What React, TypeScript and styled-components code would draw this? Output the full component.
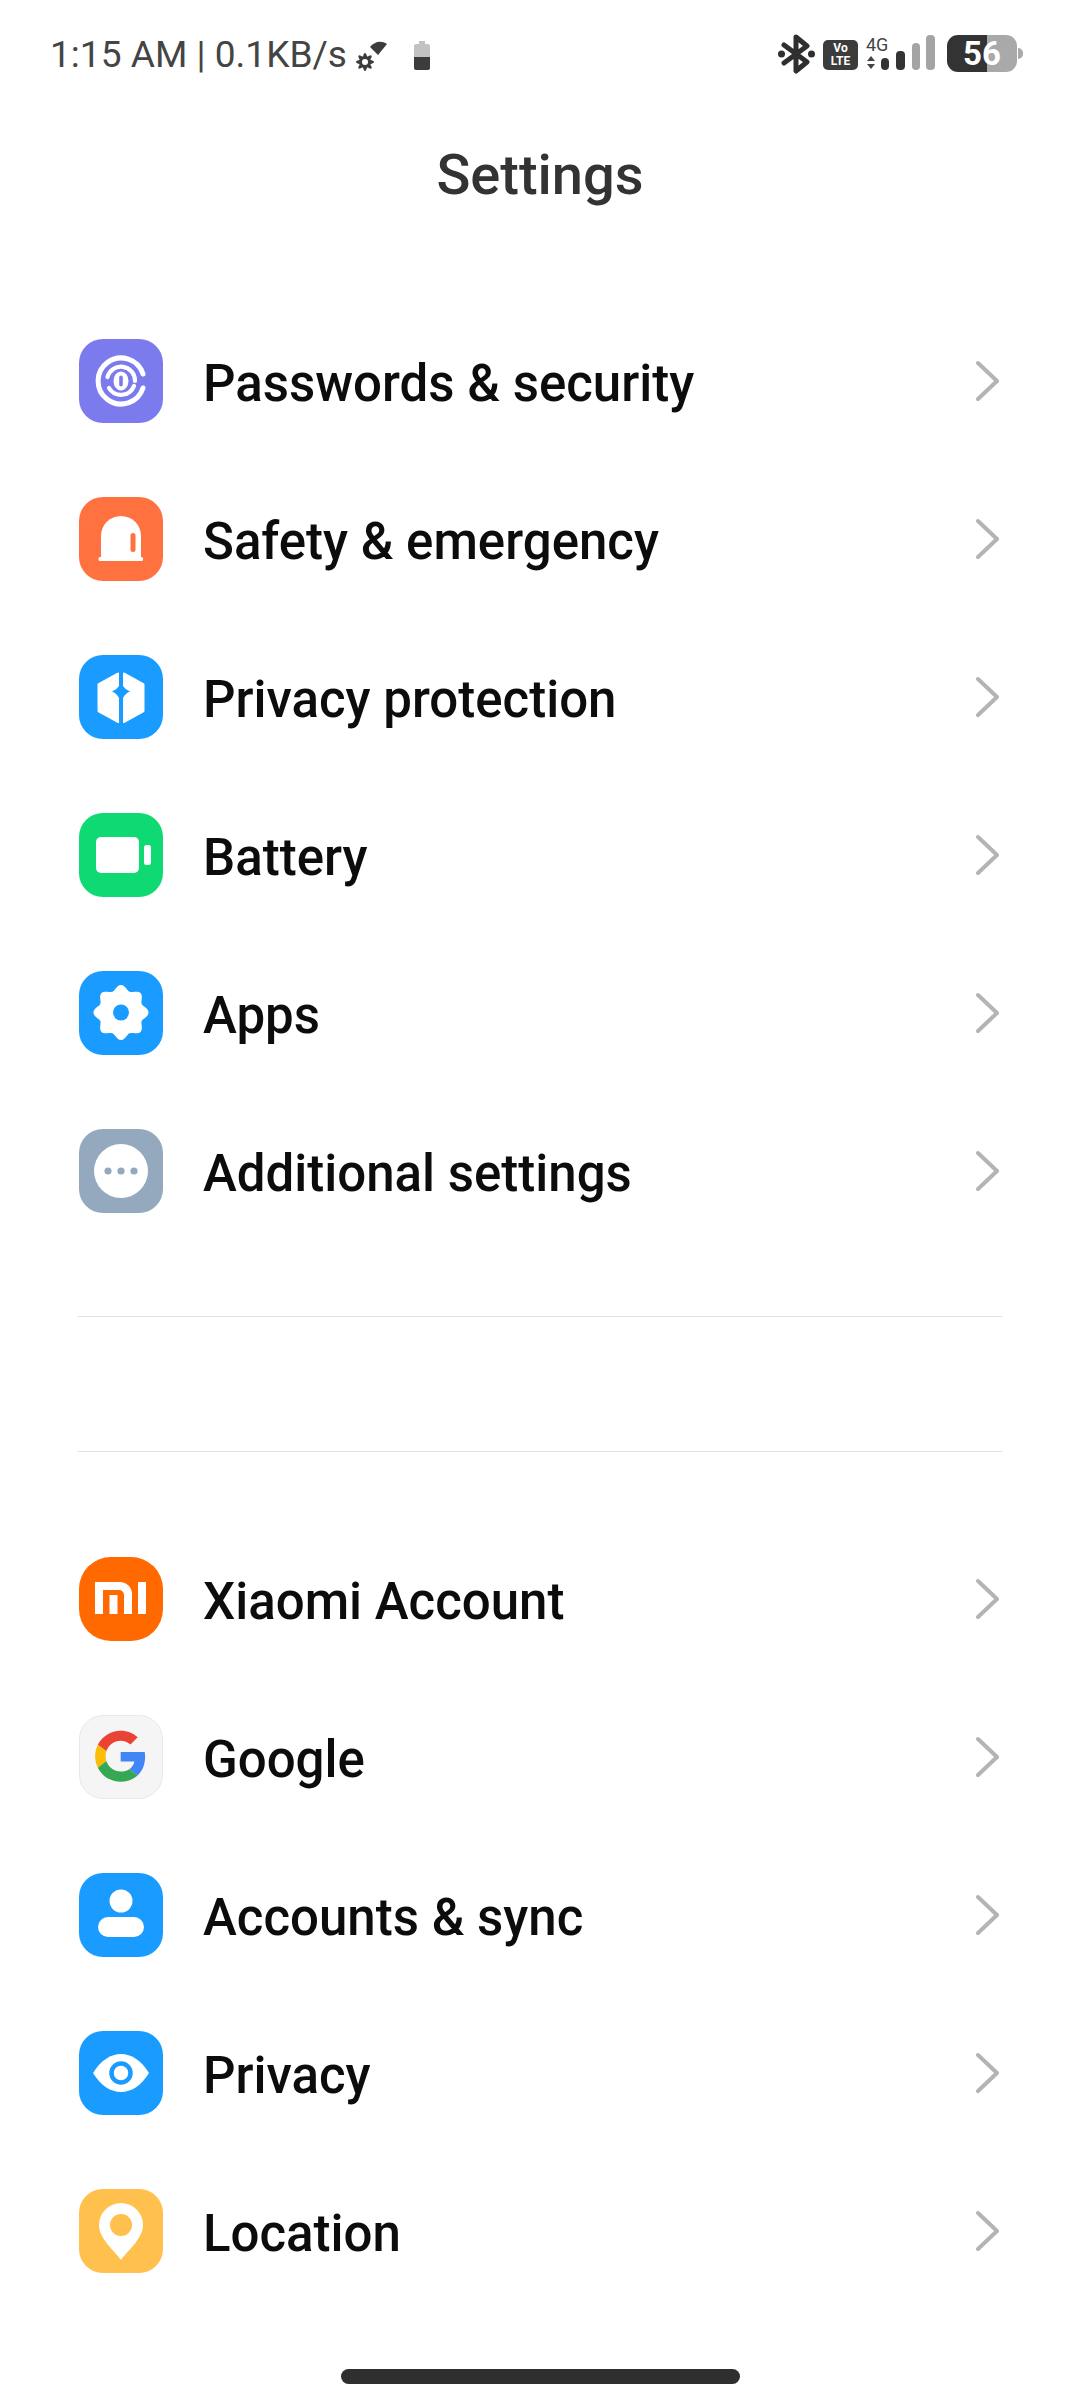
import styled, { createGlobalStyle } from "styled-components";
import type { ReactNode } from "react";

const GlobalStyle = createGlobalStyle`
  html, body {
    margin: 0;
    padding: 0;
    background: #fff;
    font-family: Roboto, "Noto Sans", sans-serif;
  }
`;

const Page = styled.div`
  width: 1080px;
  height: 2400px;
  background: #fff;
  overflow: hidden;
`;

const StatusBar = styled.div`
  height: 72px;
  padding: 34px 63px 0 50px;
  box-sizing: border-box;
  display: flex;
  align-items: flex-start;
  justify-content: space-between;
`;

const StatusLeft = styled.div`
  display: flex;
  align-items: flex-start;
`;

const StatusText = styled.span`
  font-size: 37.1px;
  line-height: 42px;
  color: #444;
`;

const StatusGlyph = styled.svg<{ $left: number; $top: number }>`
  flex: none;
  margin-left: ${(p) => p.$left}px;
  margin-top: ${(p) => p.$top}px;
`;

const StatusRight = styled.div`
  display: flex;
  align-items: flex-start;
  gap: 8px;
`;

const Volte = styled.div`
  width: 35px;
  height: 30px;
  margin-top: 6px;
  border-radius: 5px;
  background: #3c3c3c;
  color: #fff;
  font-size: 12px;
  font-weight: 700;
  line-height: 12.5px;
  text-align: center;
  padding-top: 2px;
  box-sizing: border-box;
`;

const BatteryPill = styled.div`
  position: relative;
  width: 70px;
  height: 37px;
  margin-left: 1px;
  margin-top: 1px;
  border-radius: 11px;
  background: linear-gradient(90deg, #333 0 57%, #a9a9a9 57% 100%);
  color: #fff;
  font-size: 33px;
  font-weight: 700;
  line-height: 37px;
  text-align: center;

  &::after {
    content: "";
    position: absolute;
    right: -6px;
    top: 13px;
    width: 5px;
    height: 11px;
    border-radius: 0 5px 5px 0;
    background: #a9a9a9;
  }
`;

const Title = styled.h1`
  margin: 0;
  height: 230px;
  padding-top: 72px;
  box-sizing: border-box;
  font-size: 56px;
  line-height: 62px;
  font-weight: 500;
  color: #333;
  text-align: center;
`;

const Row = styled.div`
  height: 158px;
  display: flex;
  align-items: center;
  padding: 0 80px 0 79px;
`;

const Label = styled.span`
  flex: 1;
  margin-left: 40px;
  padding-top: 5px;
  font-size: 51px;
  font-weight: 500;
  color: #0c0c0c;
`;

const IconBox = styled.svg<{ $bg: string; $radius?: number; $border?: string }>`
  width: 84px;
  height: 84px;
  flex: none;
  box-sizing: border-box;
  background: ${(p) => p.$bg};
  border-radius: ${(p) => p.$radius ?? 24}px;
  border: ${(p) => (p.$border ? `1px solid ${p.$border}` : "none")};
`;

const Chevron = styled.svg`
  width: 24px;
  height: 42px;
  flex: none;
  fill: none;
  stroke: #b4b4b4;
  stroke-width: 4;
  stroke-linecap: round;
  stroke-linejoin: round;
`;

const Divider = styled.hr<{ $top: number }>`
  margin: ${(p) => p.$top}px 78px 0;
  border: none;
  height: 1px;
  background: #e2e2e2;
`;

const Spacer = styled.div<{ $height: number }>`
  height: ${(p) => p.$height}px;
`;

const HomeBar = styled.div`
  width: 399px;
  height: 15px;
  margin: 59px auto 0;
  border-radius: 8px;
  background: #2f2f2f;
`;

// wavy outline of a gear: radius swings between the mid value +/- swing, 8 bumps
const gearOutline = (cx: number, cy: number, mid: number, swing: number) =>
  Array.from({ length: 96 }, (_, i) => {
    const a = (i * Math.PI * 2) / 96;
    const r = mid + swing * Math.cos(8 * a);
    return `${(cx + r * Math.sin(a)).toFixed(2)},${(cy - r * Math.cos(a)).toFixed(2)}`;
  }).join(" ");

const PURPLE = "#7C7BEE";
const ORANGE = "#FF7240";
const BLUE = "#1A9BFF";
const GREEN = "#0FD973";
const SLATE = "#94A9BD";

const icons: Record<string, ReactNode> = {
  passwords: (
    <IconBox viewBox="0 0 84 84" $bg={PURPLE}>
      <g fill="none" stroke="#fff" strokeLinecap="round">
        <path d="M64 35A23 23 0 1 0 64 49" strokeWidth="5" />
        <path d="M28.5 38A14 14 0 0 1 56 42" strokeWidth="4.2" />
        <path d="M30 49A14 14 0 0 0 55 47" strokeWidth="4.2" />
      </g>
      <ellipse cx="42" cy="42" rx="7.5" ry="9.5" fill="#fff" />
      <rect x="40.2" y="36.5" width="3.6" height="11" rx="1.8" fill={PURPLE} />
    </IconBox>
  ),
  safety: (
    <IconBox viewBox="0 0 84 84" $bg={ORANGE}>
      <path d="M22 60V39A20 20 0 0 1 62 39V60Z" fill="#fff" />
      <rect x="19.5" y="60" width="44.5" height="4" rx="1.5" fill="#fff" />
      <rect x="51.5" y="36" width="5" height="19" rx="2.5" fill={ORANGE} />
    </IconBox>
  ),
  shield: (
    <IconBox viewBox="0 0 84 84" $bg={BLUE}>
      <path
        d="M39 19L20 29.5V56L39 66.5ZM45 19L64 29.5V56L45 66.5Z"
        fill="#fff"
        stroke="#fff"
        strokeWidth="3"
        strokeLinejoin="round"
      />
      <path
        d="M40 15V31Q37.5 35 33 36.5Q37.5 38 40 43V70H44V43Q46.5 38 51 36.5Q46.5 35 44 31V15Z"
        fill={BLUE}
      />
    </IconBox>
  ),
  battery: (
    <IconBox viewBox="0 0 84 84" $bg={GREEN}>
      <rect x="17" y="24" width="43" height="36" rx="5" fill="#fff" />
      <rect x="65" y="32" width="7" height="20" rx="2.5" fill="#fff" />
    </IconBox>
  ),
  apps: (
    <IconBox viewBox="0 0 84 84" $bg={BLUE}>
      <polygon points={gearOutline(42, 41.5, 25, 2.6)} fill="#fff" />
      <circle cx="42" cy="41.5" r="8" fill={BLUE} />
    </IconBox>
  ),
  more: (
    <IconBox viewBox="0 0 84 84" $bg={SLATE}>
      <circle cx="42" cy="42" r="27" fill="#fff" />
      <circle cx="29" cy="42" r="3.6" fill={SLATE} />
      <circle cx="42" cy="42" r="3.6" fill={SLATE} />
      <circle cx="55" cy="42" r="3.6" fill={SLATE} />
    </IconBox>
  ),
  xiaomi: (
    <IconBox viewBox="0 0 84 84" $bg="#FF6900" $radius={32}>
      <path
        d="M16 25H41A12 12 0 0 1 53 37V57H45V38A5 5 0 0 0 40 33H24V57H16Z"
        fill="#fff"
      />
      <rect x="30.5" y="38" width="8" height="19" fill="#fff" />
      <rect x="59" y="25" width="8" height="32" fill="#fff" />
    </IconBox>
  ),
  google: (
    <IconBox viewBox="0 0 84 84" $bg="#F5F5F6" $border="#E9E9E9">
      <g transform="translate(15.5 15) scale(1.09)">
        <path fill="#EA4335" d="M24 9.5c3.54 0 6.71 1.22 9.21 3.6l6.85-6.85C35.9 2.38 30.47 0 24 0 14.62 0 6.51 5.38 2.56 13.22l7.98 6.19C12.43 13.72 17.74 9.5 24 9.5z" />
        <path fill="#4285F4" d="M46.98 24.55c0-1.57-.15-3.09-.38-4.55H24v9.02h12.94c-.58 2.96-2.26 5.48-4.78 7.18l7.73 6c4.51-4.18 7.09-10.36 7.09-17.65z" />
        <path fill="#FBBC05" d="M10.53 28.59c-.48-1.45-.76-2.99-.76-4.59s.27-3.14.76-4.59l-7.98-6.19C.92 16.46 0 20.12 0 24c0 3.88.92 7.54 2.56 10.78l7.97-6.19z" />
        <path fill="#34A853" d="M24 48c6.48 0 11.93-2.13 15.89-5.81l-7.73-6c-2.15 1.45-4.92 2.3-8.16 2.3-6.26 0-11.57-4.22-13.47-9.91l-7.98 6.19C6.51 42.62 14.62 48 24 48z" />
      </g>
    </IconBox>
  ),
  accounts: (
    <IconBox viewBox="0 0 84 84" $bg={BLUE}>
      <circle cx="42" cy="28" r="11.5" fill="#fff" />
      <rect x="19" y="44" width="46" height="20" rx="10" fill="#fff" />
    </IconBox>
  ),
  eye: (
    <IconBox viewBox="0 0 84 84" $bg={BLUE}>
      <path d="M14 42C22 29 32 23 42 23S62 29 70 42C62 55 52 61 42 61S22 55 14 42Z" fill="#fff" />
      <circle cx="42" cy="42" r="9.5" fill="none" stroke={BLUE} strokeWidth="4.5" />
    </IconBox>
  ),
  location: (
    <IconBox viewBox="0 0 84 84" $bg="#FFC04D">
      <path d="M42 71C36 62 20 50 20 36A22 22 0 0 1 64 36C64 50 48 62 42 71Z" fill="#fff" />
      <circle cx="42" cy="36" r="11" fill="#FFC04D" />
    </IconBox>
  ),
};

const topGroup = [
  { icon: "passwords", label: "Passwords & security" },
  { icon: "safety", label: "Safety & emergency" },
  { icon: "shield", label: "Privacy protection" },
  { icon: "battery", label: "Battery" },
  { icon: "apps", label: "Apps" },
  { icon: "more", label: "Additional settings" },
];

const bottomGroup = [
  { icon: "xiaomi", label: "Xiaomi Account" },
  { icon: "google", label: "Google" },
  { icon: "accounts", label: "Accounts & sync" },
  { icon: "eye", label: "Privacy" },
  { icon: "location", label: "Location" },
];

const SettingRow = ({ icon, label }: { icon: string; label: string }) => (
  <Row>
    {icons[icon]}
    <Label>{label}</Label>
    <Chevron viewBox="0 0 24 42">
      <path d="M2 3L21 21L2 39" />
    </Chevron>
  </Row>
);

export default function App() {
  return (
    <Page>
      <GlobalStyle />
      <StatusBar>
        <StatusLeft>
          <StatusText>1:15 AM | 0.1KB/s</StatusText>
          <StatusGlyph width="34" height="34" viewBox="0 0 34 34" $left={8} $top={4}>
            <polygon points={gearOutline(10, 24, 7.5, 1.6)} fill="#3c3c3c" />
            <circle cx="10" cy="24" r="3" fill="#fff" />
            <path d="M15 9C19 4 26 2 32 6L23 17Z" fill="#3c3c3c" />
          </StatusGlyph>
          <StatusGlyph width="16" height="30" viewBox="0 0 16 30" $left={25} $top={7}>
            <path d="M5 0H11V3H14Q16 3 16 5V16H0V5Q0 3 2 3H5Z" fill="#c2c2c2" />
            <path d="M0 16H16V27Q16 29 14 29H2Q0 29 0 27Z" fill="#3c3c3c" />
          </StatusGlyph>
        </StatusLeft>
        <StatusRight>
          <svg width="37" height="40" viewBox="0 0 37 40">
            <path
              d="M6 11L29 28L18 37V3L29 12L6 29"
              fill="none"
              stroke="#2f2f2f"
              strokeWidth="5"
              strokeLinejoin="round"
              strokeLinecap="round"
            />
            <circle cx="3.5" cy="20" r="3.5" fill="#2f2f2f" />
            <circle cx="33.5" cy="20" r="3.5" fill="#2f2f2f" />
          </svg>
          <Volte>
            Vo
            <br />
            LTE
          </Volte>
          <svg width="72" height="40" viewBox="0 0 72 40">
            <text x="0" y="17" fontFamily="Roboto, sans-serif" fontSize="18" fill="#444">
              4G
            </text>
            <path d="M5 22L9 27H1ZM5 35L1 30H9Z" fill="#444" />
            <rect x="15" y="24" width="8" height="12" rx="4" fill="#333" />
            <rect x="30" y="17" width="9" height="19" rx="4" fill="#333" />
            <rect x="46" y="9" width="8" height="27" rx="4" fill="#a4a4a4" />
            <rect x="60" y="1" width="9" height="35" rx="4" fill="#a4a4a4" />
          </svg>
          <BatteryPill>56</BatteryPill>
        </StatusRight>
      </StatusBar>
      <Title>Settings</Title>
      {topGroup.map((item) => (
        <SettingRow key={item.icon} {...item} />
      ))}
      <Divider $top={66} />
      <Spacer $height={56} />
      <Divider $top={78} />
      <Spacer $height={68} />
      {bottomGroup.map((item) => (
        <SettingRow key={item.icon} {...item} />
      ))}
      <HomeBar />
    </Page>
  );
}
